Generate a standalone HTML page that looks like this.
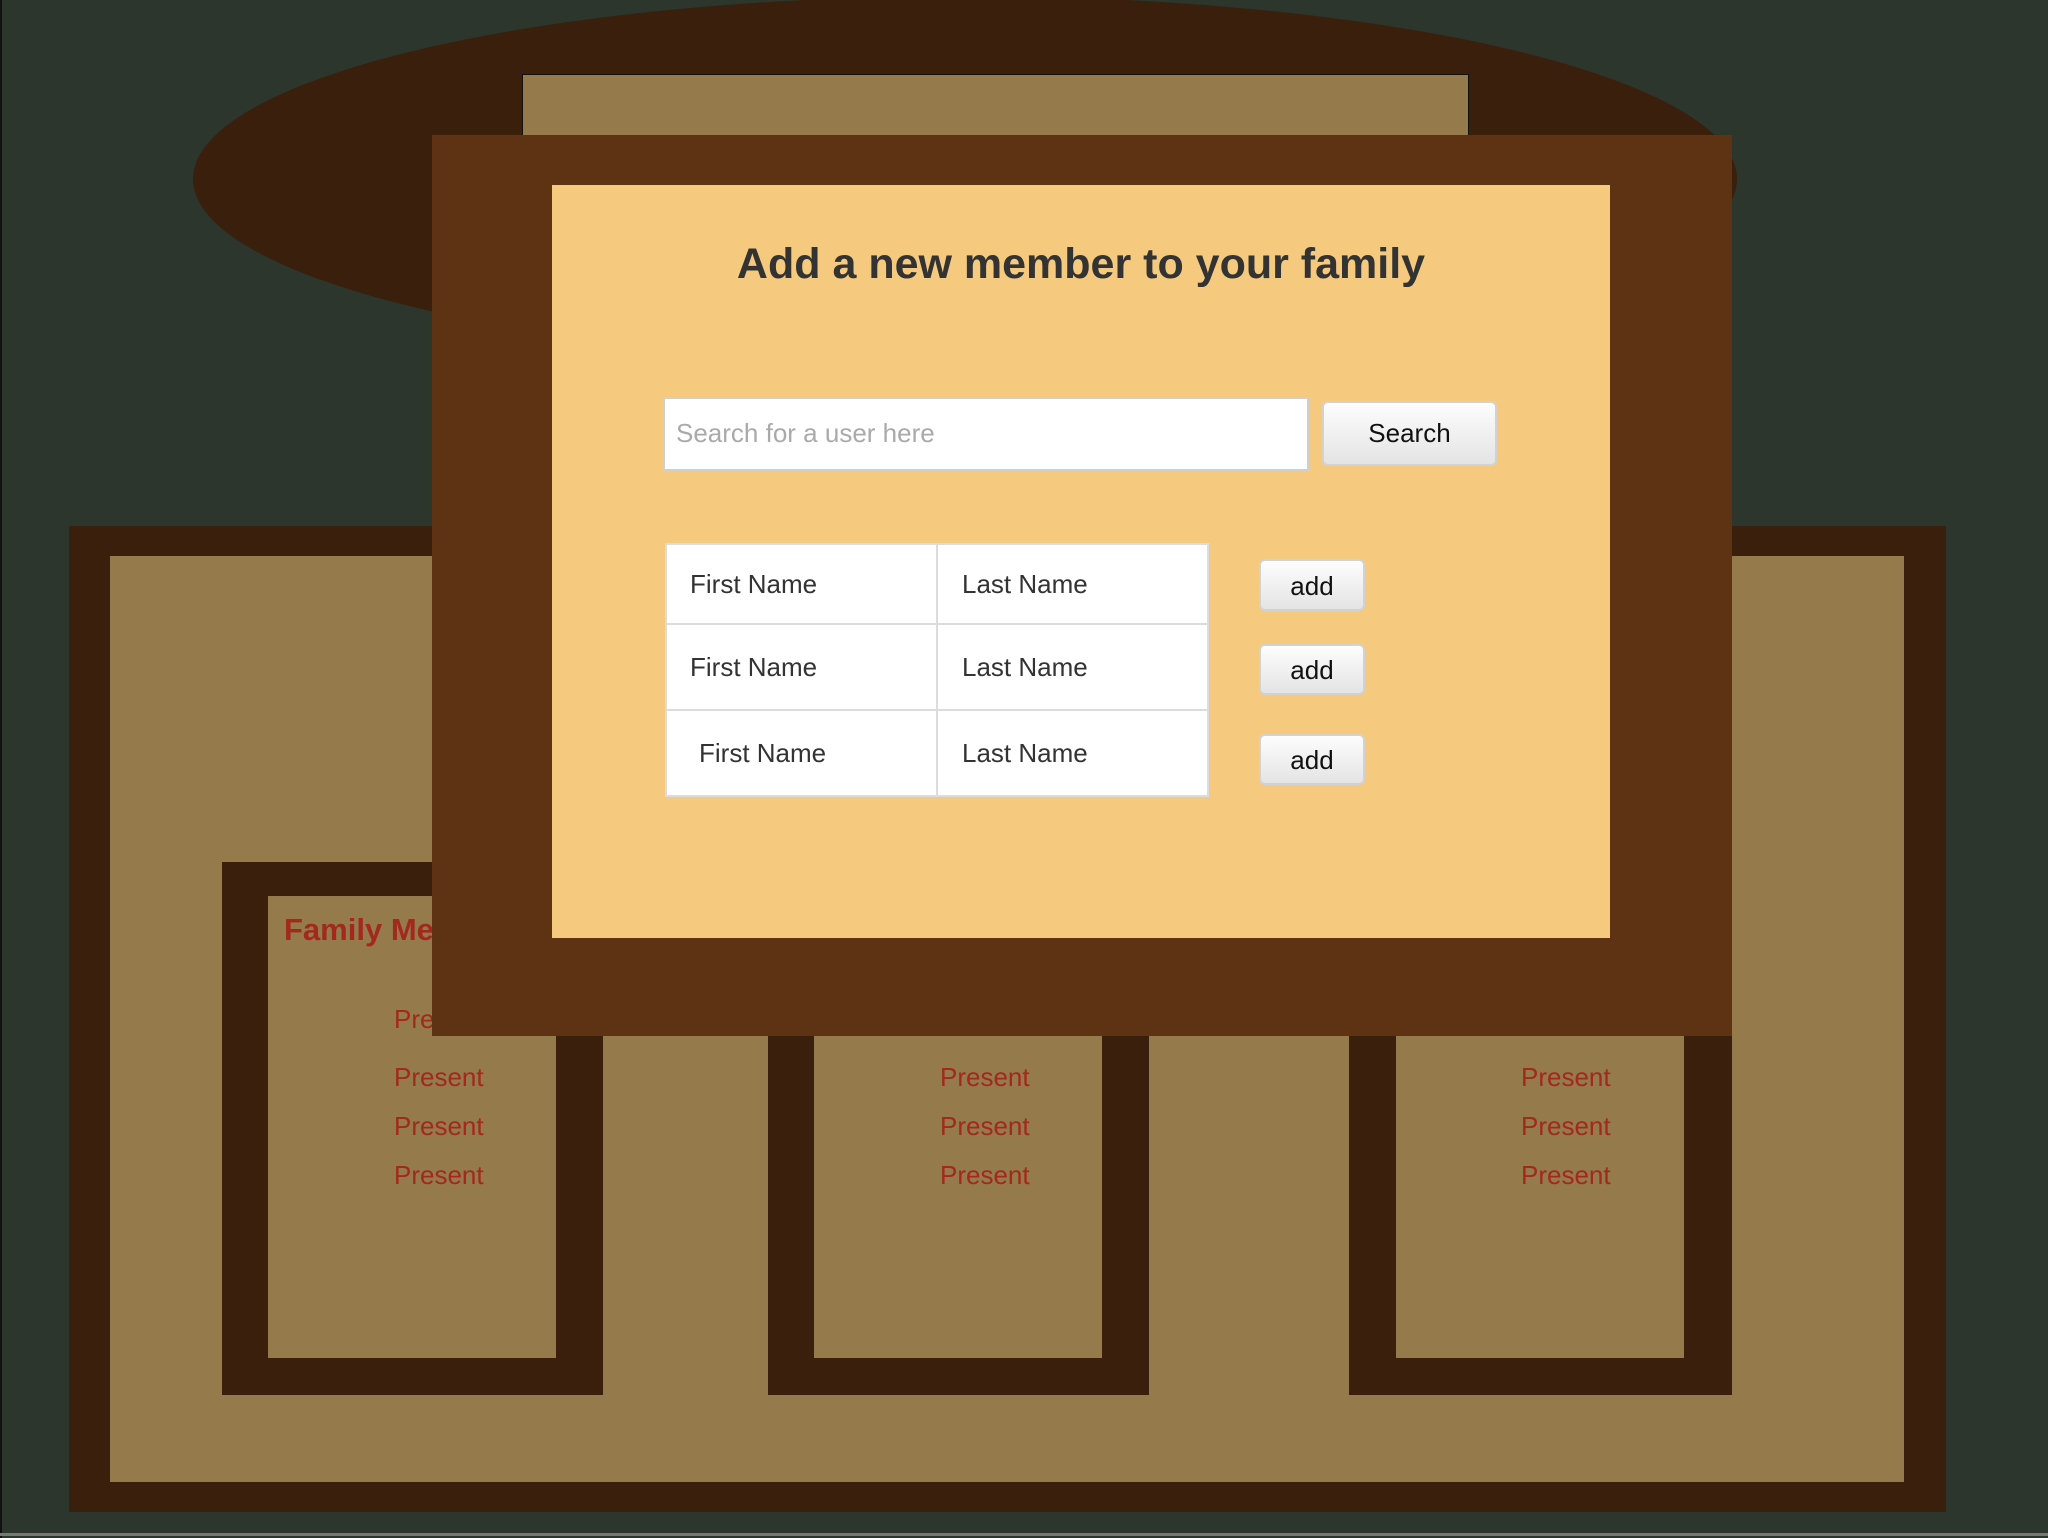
<!DOCTYPE html>
<html><head><meta charset="utf-8"><style>
*{margin:0;padding:0;box-sizing:border-box}
body{width:2048px;height:1538px;overflow:hidden;background:#2c362c;position:relative;font-family:"Liberation Sans",Arial,sans-serif}
.a{position:absolute}
.present{position:absolute;color:#a3281d;font-size:26px}
.btn{position:absolute;background:linear-gradient(#fdfdfd,#e4e4e4);border:2px solid #d2d2d2;border-radius:6px;color:#111;font-size:26px;text-align:center}
td{border:2px solid #dcdcdc;font-size:26px;color:#333;background:#fff}
</style></head><body>
<div class="a" style="left:0;top:0;width:2px;height:1538px;background:#111"></div>
<div class="a" style="left:0;top:1533px;width:2048px;height:3px;background:#777"></div>
<div class="a" style="left:193px;top:-4px;width:1544px;height:366px;border-radius:50%;background:#3a1f0c"></div>
<div class="a" style="left:522px;top:74px;width:947px;height:120px;background:#957b4c;border:1px solid #111"></div>

<div class="a" style="left:69px;top:526px;width:1877px;height:986px;background:#3a1f0c"></div>
<div class="a" style="left:110px;top:556px;width:1794px;height:926px;background:#957b4c"></div>

<div class="a" style="left:222px;top:862px;width:381px;height:533px;background:#3a1f0c"></div>
<div class="a" style="left:268px;top:896px;width:288px;height:462px;background:#957b4c"></div>
<div class="a" style="left:768px;top:862px;width:381px;height:533px;background:#3a1f0c"></div>
<div class="a" style="left:814px;top:896px;width:288px;height:462px;background:#957b4c"></div>
<div class="a" style="left:1349px;top:862px;width:383px;height:533px;background:#3a1f0c"></div>
<div class="a" style="left:1396px;top:896px;width:288px;height:462px;background:#957b4c"></div>

<div class="a" style="left:284px;top:912px;color:#a3281d;font-size:31px;font-weight:bold">Family Members</div>
<div class="present" style="left:394px;top:1004px">Present</div>
<div class="present" style="left:394px;top:1062px">Present</div>
<div class="present" style="left:394px;top:1111px">Present</div>
<div class="present" style="left:394px;top:1160px">Present</div>
<div class="present" style="left:940px;top:1062px">Present</div>
<div class="present" style="left:940px;top:1111px">Present</div>
<div class="present" style="left:940px;top:1160px">Present</div>
<div class="present" style="left:1521px;top:1062px">Present</div>
<div class="present" style="left:1521px;top:1111px">Present</div>
<div class="present" style="left:1521px;top:1160px">Present</div>

<div class="a" style="left:432px;top:135px;width:1300px;height:901px;background:#5e3314"></div>
<div class="a" style="left:552px;top:185px;width:1058px;height:753px;background:#f6ca7e"></div>
<div class="a" style="left:552px;top:240px;width:1058px;text-align:center;font-size:43px;font-weight:bold;color:#333">Add a new member to your family</div>

<div class="a" style="left:663px;top:397px;width:646px;height:74px;background:#fff;border:2px solid #cfcfcf;color:#aaa;font-size:26px;padding:19px 0 0 11px">Search for a user here</div>
<div class="btn" style="left:1322px;top:401px;width:175px;height:65px;line-height:61px">Search</div>

<table class="a" style="left:665px;top:543px;width:544px;height:252px;border-collapse:collapse">
<tr style="height:80px"><td style="width:271px;padding-left:23px">First Name</td><td style="padding-left:24px">Last Name</td></tr>
<tr style="height:86px"><td style="padding-left:23px">First Name</td><td style="padding-left:24px">Last Name</td></tr>
<tr style="height:86px"><td style="padding-left:32px">First Name</td><td style="padding-left:24px">Last Name</td></tr>
</table>
<div class="btn" style="left:1259px;top:559px;width:106px;height:52px;line-height:50px">add</div>
<div class="btn" style="left:1259px;top:644px;width:106px;height:51px;line-height:49px">add</div>
<div class="btn" style="left:1259px;top:734px;width:106px;height:51px;line-height:49px">add</div>
</body></html>
